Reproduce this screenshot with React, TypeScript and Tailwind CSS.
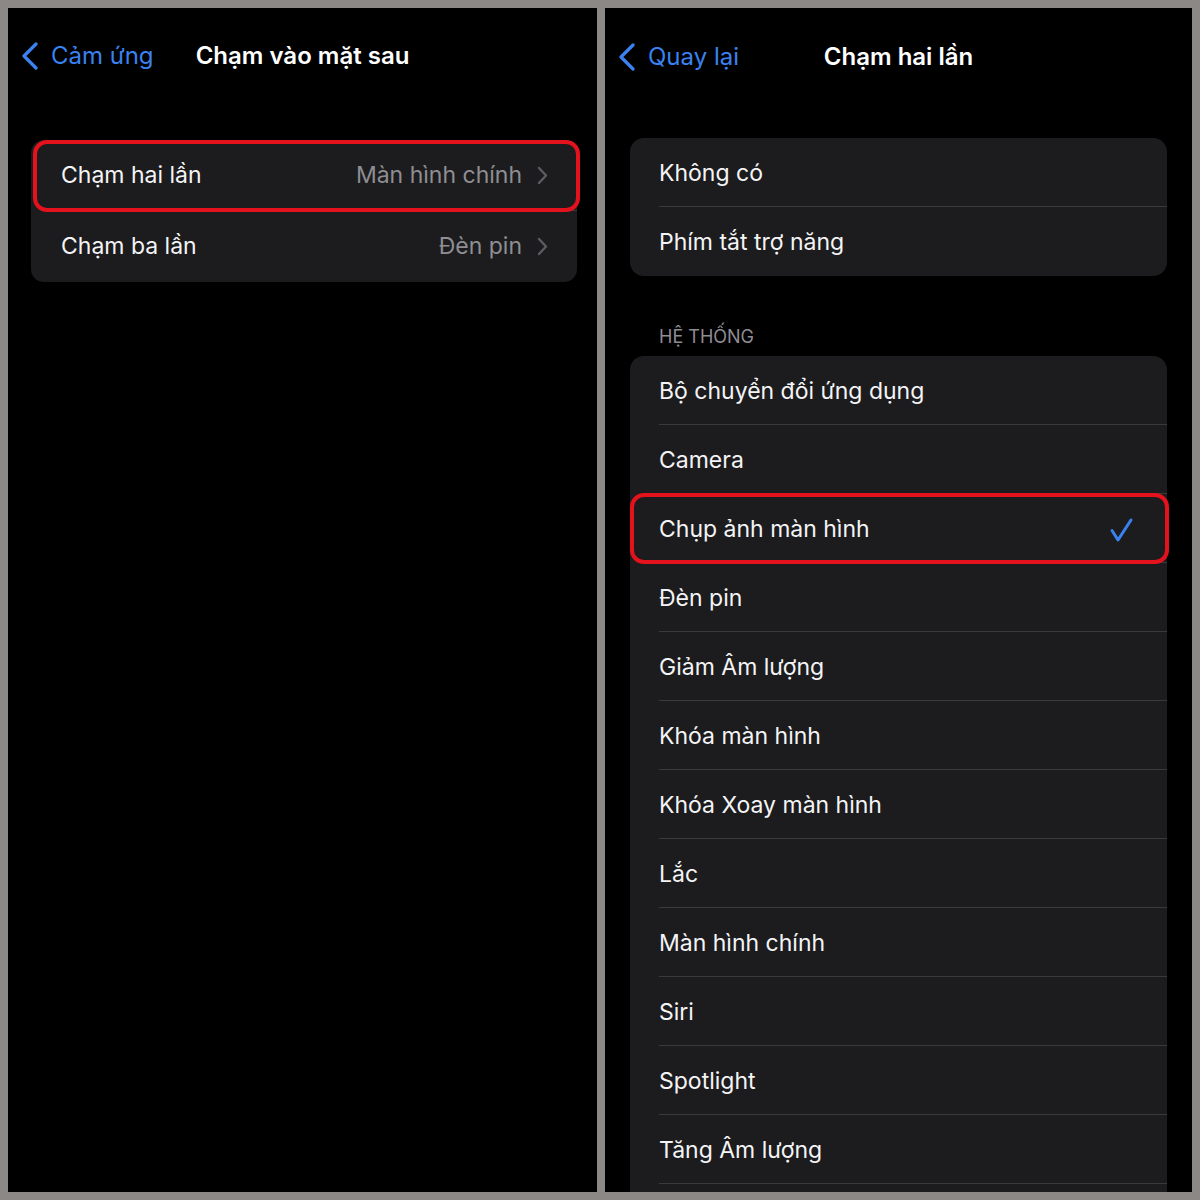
import React from "react";

const font = { fontFamily: "Inter, 'Noto Sans', 'Liberation Sans', sans-serif" };

function BackChevron() {
  return (
    <svg width="18" height="28" viewBox="0 0 18 28" fill="none">
      <path d="M15 2 L3 14 L15 26" stroke="#3a82f0" strokeWidth="3.2" strokeLinecap="round" strokeLinejoin="round" />
    </svg>
  );
}

function RowChevron() {
  return (
    <svg width="11" height="19" viewBox="0 0 11 19" fill="none">
      <path d="M2 2 L9 9.5 L2 17" stroke="#5c5c61" strokeWidth="2.4" strokeLinecap="round" strokeLinejoin="round" />
    </svg>
  );
}

function Check() {
  return (
    <svg width="26" height="26" viewBox="0 0 26 26" fill="none">
      <path d="M3 13.5 L9 23 L22 3" stroke="#3a82f0" strokeWidth="3" strokeLinecap="round" strokeLinejoin="round" />
    </svg>
  );
}

function NavBar({ back, title }: { back: string; title: string }) {
  return (
    <div className="relative flex h-[44px] items-center">
      <div className="flex items-center gap-[12px] pl-[13px] text-[24px] text-[#3a82f0]">
        <BackChevron />
        <span>{back}</span>
      </div>
      <div className="pointer-events-none absolute inset-0 flex items-center justify-center text-[24px] font-semibold text-white">
        {title}
      </div>
    </div>
  );
}

function Highlight({ className }: { className: string }) {
  return <div className={"pointer-events-none absolute rounded-[14px] border-[4px] border-[#e3121c] " + className} />;
}

const leftRows = [
  { label: "Chạm hai lần", value: "Màn hình chính", marked: true },
  { label: "Chạm ba lần", value: "Đèn pin", marked: false },
];

const topOptions = ["Không có", "Phím tắt trợ năng"];

const systemOptions = [
  "Bộ chuyển đổi ứng dụng",
  "Camera",
  "Chụp ảnh màn hình",
  "Đèn pin",
  "Giảm Âm lượng",
  "Khóa màn hình",
  "Khóa Xoay màn hình",
  "Lắc",
  "Màn hình chính",
  "Siri",
  "Spotlight",
  "Tăng Âm lượng",
];

const selected = "Chụp ảnh màn hình";

function OptionRow({ label, last }: { label: string; last?: boolean }) {
  const isSel = label === selected;
  return (
    <div className="relative h-[69px]">
      <div className="flex h-full items-center justify-between pt-[2px] pl-[29px] pr-[32px]">
        <span className="text-[23px] text-[#f4f4f6]">{label}</span>
        {isSel && <Check />}
      </div>
      {!last && <div className="absolute bottom-0 left-[29px] right-0 h-px bg-[#3a3a3d]" />}
      {isSel && <Highlight className="-left-[0px] -right-[2px] -top-[1px] -bottom-[1px]" />}
    </div>
  );
}

export default function App() {
  return (
    <div className="flex h-[1200px] w-[1200px] gap-[8px] bg-[#8b8885] p-[8px]" style={font}>
      {/* Left screen: back tap settings */}
      <div className="h-[1184px] w-[589px] overflow-hidden bg-black">
        <div className="pt-[26px]">
          <NavBar back="Cảm ứng" title="Chạm vào mặt sau" />
        </div>
        <div className="ml-[23px] mr-[20px] mt-[62px] rounded-[13px] bg-[#1c1c1e]">
          {leftRows.map((r, i) => (
            <div key={r.label} className="relative h-[71px]">
              <div className="flex h-full items-center justify-between pl-[30px] pr-[29px]">
                <span className="text-[23px] text-[#f4f4f6]">{r.label}</span>
                <div className="flex items-center gap-[15px]">
                  <span className="text-[23px] text-[#8e8e93]">{r.value}</span>
                  <RowChevron />
                </div>
              </div>
              {i === 0 && <div className="absolute bottom-0 left-[30px] right-0 h-px bg-[#3a3a3d]" />}
              {r.marked && <Highlight className="left-[2px] -right-[3px] top-0 -bottom-[1px]" />}
            </div>
          ))}
        </div>
      </div>

      {/* Right screen: double tap action list */}
      <div className="h-[1184px] w-[587px] overflow-hidden bg-black">
        <div className="pt-[27px]">
          <NavBar back="Quay lại" title="Chạm hai lần" />
        </div>
        <div className="mx-[25px] mt-[59px] rounded-[14px] bg-[#1c1c1e]">
          {topOptions.map((o, i) => (
            <OptionRow key={o} label={o} last={i === topOptions.length - 1} />
          ))}
        </div>
        <div className="mt-[47px] pb-[6px] pl-[54px] text-[18px] text-[#8d8d93]">HỆ THỐNG</div>
        <div className="mx-[25px] rounded-[14px] bg-[#1c1c1e] pb-[60px]">
          {systemOptions.map((o) => (
            <OptionRow key={o} label={o} />
          ))}
        </div>
      </div>
    </div>
  );
}
